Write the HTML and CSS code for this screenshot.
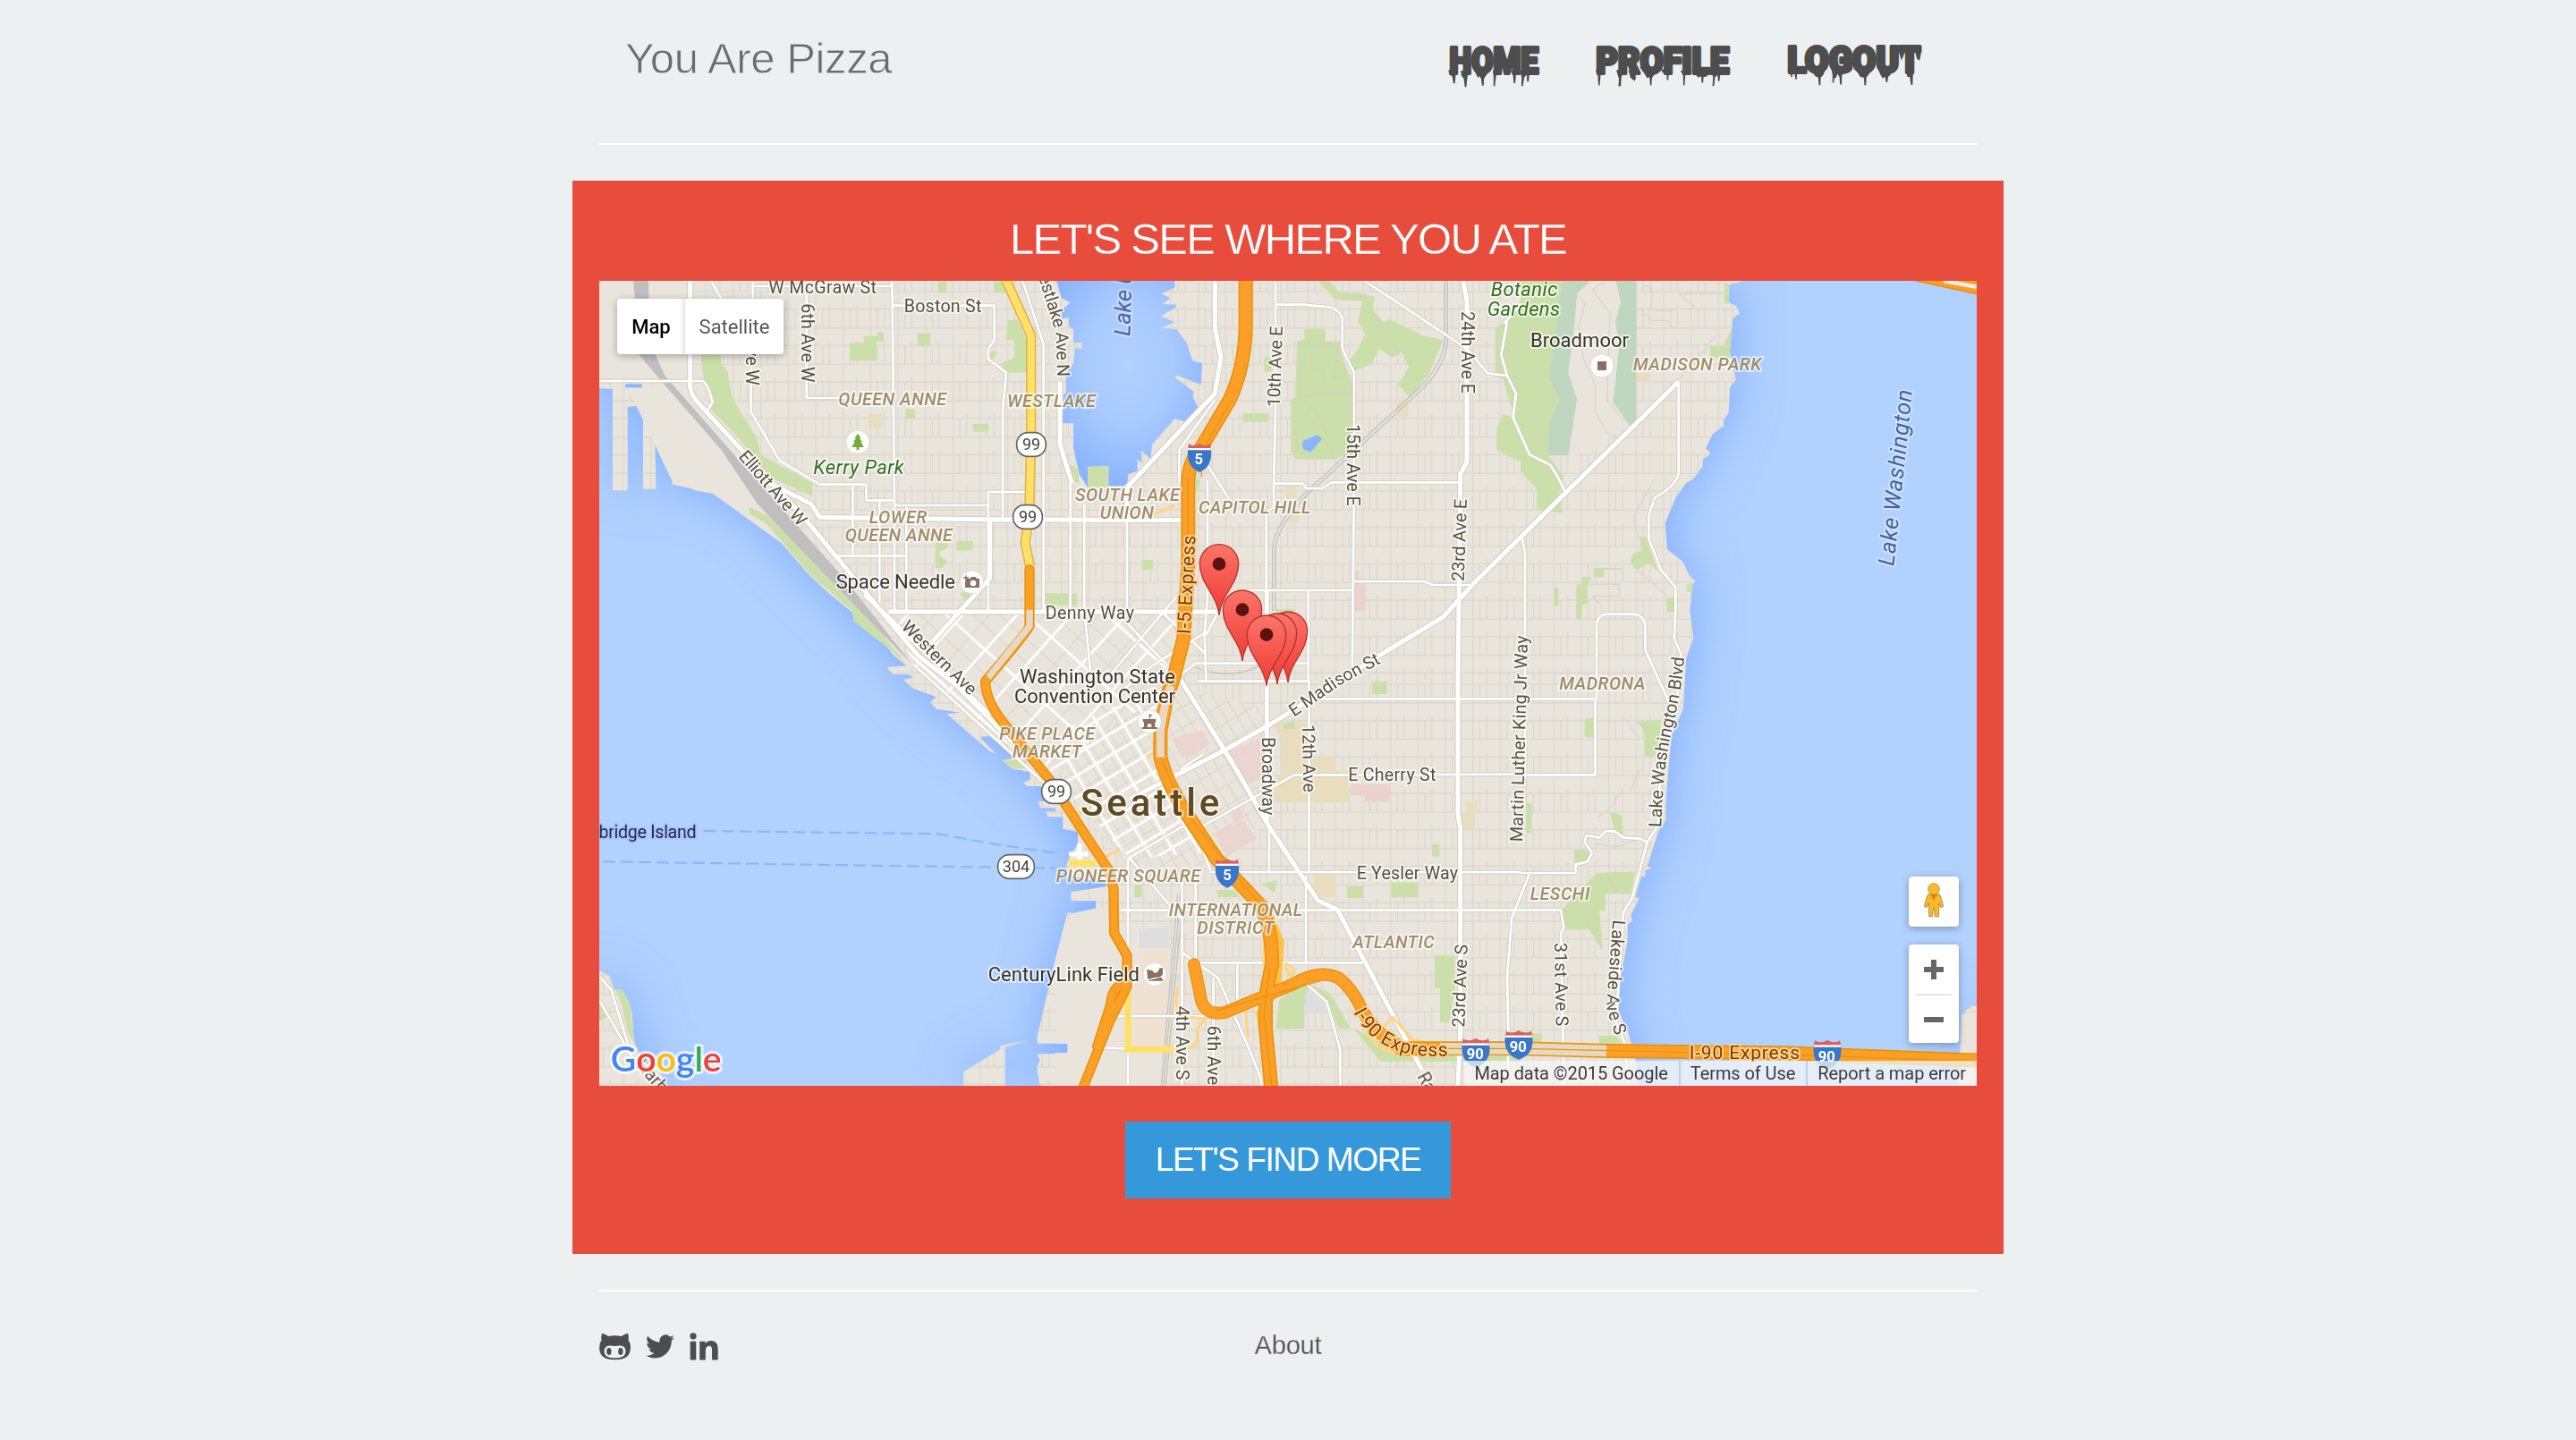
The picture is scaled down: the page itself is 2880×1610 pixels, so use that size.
FILE: index.html
```html
<!DOCTYPE html>
<html lang="en">
<head>
<meta charset="utf-8">
<title>You Are Pizza</title>
<link rel="stylesheet" href="styles.css">
</head>
<body>
<div class="container">
  <header class="header">
    <h1 class="brand">You Are Pizza</h1>
    <nav class="nav">
      <a class="nav-link" aria-label="Home"><svg width="104" height="50" viewBox="54 56 291 140">
        <text x="61" y="147" textLength="278" lengthAdjust="spacingAndGlyphs">HOME</text>
        <path d="M58 138H82L80 160 78 180H73L70 158 60 152ZM97 140H121L116 168 114 191H109L106 165 98 155ZM132 128H186L178 152 169 165 168 187H163L160 165 154 157 150 163 145 152ZM197 140H220L207 156 203 189H199L199 158ZM252 140H275L269 155 267 179H262L260 155ZM280 140H325L311 150 309 174H304L303 152 295 162 291 188H286L287 160Z"/>
      </svg></a>
      <a class="nav-link" aria-label="Profile"><svg width="154" height="50" viewBox="510 56 431 140">
        <text x="517" y="147" textLength="416" lengthAdjust="spacingAndGlyphs">PROFILE</text>
        <path d="M515 138H541L540 152 531 153 528 186H524L522 155ZM580 138H605L596 160 594 189H587L588 165ZM618 138H640L641 165 637 172 624 162ZM653 128H710L702 150 692 162 690 186H686L684 160 676 163 670 152ZM719 136H748L744 150 743 170H739L737 148 725 146ZM781 140H805L796 155 794 186H790L789 155ZM815 140H868L864 158 853 160 852 178H847L846 158 835 161 828 151ZM878 140H915L906 150 903 173H899L897 154 889 160 886 188H881L883 162Z"/>
      </svg></a>
      <a class="nav-link" aria-label="Logout"><svg width="154" height="50" viewBox="1105 56 435 140">
        <text x="1112" y="147" textLength="420" lengthAdjust="spacingAndGlyphs">LOGOUT</text>
        <path d="M1112 136H1155L1142 150 1141 168H1137L1134 148 1128 150 1127 160H1123L1121 148ZM1178 128H1233L1226 152 1217 162 1216 186H1211L1209 162 1200 158ZM1250 134H1295L1284 155 1283 184H1278L1276 160 1269 150 1266 162 1260 164 1258 178H1254L1254 152ZM1322 128H1378L1370 150 1361 162 1360 186H1355L1353 162 1342 160ZM1395 128H1445L1438 152 1430 160 1427 177H1423L1420 160 1412 164 1405 152ZM1487 130H1512L1508 158 1507 185H1502L1498 160 1490 160ZM1462 76H1485L1472 108ZM1515 76H1535L1531 100 1528 108 1520 102Z"/>
      </svg></a>
    </nav>
  </header>

  <main class="panel">
    <h2 class="panel-title">LET'S SEE WHERE YOU ATE</h2>
    <div class="map">
      <svg class="map-canvas" width="1540" height="900" viewBox="30 42 4620 2700">
        <defs>
          <filter id="shoreBlur" x="-10%" y="-10%" width="120%" height="120%"><feGaussianBlur stdDeviation="80"/></filter>
          <radialGradient id="lake" cx=".5" cy=".4" r=".6"><stop offset="0" stop-color="#b1d1ff"/><stop offset=".5" stop-color="#a8caff"/><stop offset="1" stop-color="#8ab4ff"/></radialGradient>
          <linearGradient id="pin" x1="0" y1="0" x2="0" y2="1"><stop offset="0" stop-color="#fc7569"/><stop offset="1" stop-color="#ee3a34"/></linearGradient>
          <pattern id="blocks" width="92" height="122" patternUnits="userSpaceOnUse"><path d="M20 0V122M66 0V78M0 15H92M0 78H92M43 15V78" class="lane"/></pattern>
          <pattern id="blocksNorth" width="68" height="60" patternUnits="userSpaceOnUse" patternTransform="rotate(42)"><path d="M0 5H68M5 0V60" class="lane"/></pattern>
          <pattern id="streetsNorth" width="136" height="180" patternUnits="userSpaceOnUse" patternTransform="rotate(42)"><path d="M0 65H136M73 0V180" class="white-street"/></pattern>
          <pattern id="blocksSouth" width="36" height="60" patternUnits="userSpaceOnUse" patternTransform="rotate(-31)"><path d="M0 5H36M5 0V60" class="lane"/></pattern>
          <pattern id="streetsSouth" width="74" height="62" patternUnits="userSpaceOnUse" patternTransform="rotate(-31)"><path d="M0 5H74M5 0V62" class="white-street"/></pattern>
          <g id="land">
            <path d="M30 42H1560V1380H1050L1085 1372 1065 1362H1015L995 1338 1060 1333 1020 1300 965 1235 885 1185 880 1155 800 1090 735 1030 640 920 585 855 530 828 410 755 350 745 320 728 275 725 270 480 255 430 235 400 213 403 220 740H177V475H185V460L125 465V745H75V405L30 402Z"/>
            <path transform="translate(1560)" d="M0 42H1560V1380H0Z"/>
            <path transform="translate(3120)" d="M0 42H745L700 55 698 115 722 125 735 150 712 168 702 280 722 375 702 400 698 485 680 510 682 528 645 555 620 605 635 615 632 628 612 638 610 665 578 708 555 720 520 770 485 855 492 942 545 985 565 1028 587 1050 577 1060 568 1150 580 1240 555 1310 552 1380H0Z"/>
            <path transform="translate(0 1380)" d="M1050 0H1560V460H1535L1528 442H1560V430H1508L1503 408H1535L1510 357H1465L1452 345 1475 335V310L1415 298 1380 270 1420 265 1400 240 1350 190H1315L1310 198 1362 250 1340 240 1196 115 1240 110 1160 98 1140 75 1160 58 1080 28ZM1560 935L1498 1200 1500 1220H1560V1255H1498L1508 1275 1498 1300 1508 1362H1560ZM1375 1228L1470 1210 1391 1232V1362H1252V1315L1375 1240ZM30 975L65 995 80 1040 105 1040 130 1080 140 1120 145 1190 150 1225 180 1280 230 1310 260 1362H30Z"/>
            <path transform="translate(1560 1380)" d="M0 0H1560V1362H0V1252H90V1220H0V935L40 782H135V742H52V712L172 693 168 680 60 660 35 630 45 600 75 550V510L25 500V460H0Z"/>
            <path transform="translate(3120 1380)" d="M0 0H552L545 100 505 190 488 400 487 470 462 510 425 625 440 632 418 640V660H405L385 730 398 733 370 790 375 810 360 820 358 880 335 1000 325 1105 360 1180 390 1290 395 1362H0ZM1490 1110L1515 1095H1530V1362H1470L1480 1250Z"/>
          </g>
          <g id="arterials">
            <path d="M335 42V400Q340 430 370 460L720 840 1100 1300 1230 1400 1560 1735M920 1095L1220 1380 1340 1500M600 720L740 790 770 835 1340 842 2000 845M1340 842V1040L1140 1260M1000 1152H2110"/>
            <path transform="translate(1560)" d="M535 42V200L555 300 535 420 240 735V840M1368 42L1380 110V650L1358 690 1350 1380V1830L1358 1880V2560L1350 2742M2090 380L1400 1060 1300 1170 1100 1290 720 1530 560 1620 250 1780M709 1080V1860M15 380V590L55 720M420 1380L600 1670 715 1870 840 2060 880 2120 945 2150 1040 2330 1230 2690"/>
          </g>
          <g id="streets">
            <path d="M30 378H375Q395 385 410 450L390 480M545 42V60H1010V42M545 60L538 480 635 645 770 725H925V778H1020M1012 42L1020 780V1150M725 60V435H1015M1020 795H1335M1465 750H1335V1150M1012 125H1355V240L1335 270V305L1395 350 1383 470V840M880 730V965M815 965H1060V800M970 780V1120M1060 965V1150M405 42L450 120M1450 42L1520 255V1150M1085 1330L1560 1760"/>
            <path transform="translate(1560)" d="M738 42V480L732 720V800L707 820V1080M738 122H830L920 130Q950 140 962 165V270L1002 350V720L995 1380M732 722H830L840 738H895L925 718H1350M640 1080H995M998 1050H1235L1265 1062H1400M848 1080V1380M1035 42L1140 110 1380 270 1450 352 1515 360M1515 180L1495 290 1515 360 1545 420 1535 500 1590 625 1660 660 1685 700 1710 750M510 660L580 770M535 440L415 610V720M510 710V1100L500 1230 505 1380M505 1230L545 1155M50 720V1150M97 790V1150M240 840V1150M415 1090L170 1380M360 1155L500 1290M240 1190L420 1380M97 1150L120 1380M505 1220L330 1330 220 1420M320 1440L470 1325H848M1560 120L1505 185"/>
            <path transform="translate(3120)" d="M530 380V690Q520 730 450 770L430 830V905L470 1010 520 1070V1150L515 1240 540 1300 520 1500M5 905L15 950V1700M255 1445V1190Q265 1160 290 1160H380Q415 1165 418 1200V1280L500 1460"/>
            <path transform="translate(0 1380)" d="M30 995L70 1040 130 1235M30 1075L160 1300"/>
            <path transform="translate(1560 1380)" d="M495 490L800 320 1560 317M495 250L420 300M850 0V650M840 660V950M480 5H848M880 65H1810M717 480V645H1560M215 773H1560M475 950H1030M243 600V1362M150 1235L390 1240M205 1128H520M425 640V1362M470 640V940M425 915L545 1000 650 1240 690 1340V1362M530 1000V1362M610 950V1100M830 1010L910 1080 955 1240V1362M1590 650L1530 800 1515 1000 1520 1220 1515 1362M520 645H717M243 600L430 490M250 600L420 800M100 1362L170 1200 190 1130M340 170L520 640"/>
            <path transform="translate(3120 1380)" d="M250 65V320H0M0 648H185V620L225 610 240 580 215 545 220 522 265 530 285 508H315L345 530 400 533 425 545M530 60L470 300 460 490 425 545 375 730 345 780 330 1000 320 1150 350 1220 360 1362M0 772H135L145 830 135 850 145 1362"/>
          </g>
          <g id="interstate"><path d="M-39 -28L-36 -48Q-20 -36 0 -49Q20 -36 36 -48L39 -28Z" fill="#d9635c"/><path d="M-38 -33H38V-24H-38Z" fill="#fff"/><path d="M-39 -26H39Q44 30 0 48Q-44 30 -39 -26Z" fill="#3a77c8"/></g>
          <g id="marker"><path d="M0 0C-7 -70 -65 -104 -65 -172A65 65 0 0 1 65 -172C65 -104 7 -70 0 0Z" fill="url(#pin)" stroke="#b4332b" stroke-width="4"/></g>
          <path id="elliottLine" d="M495 632L710 880"/>
          <path id="westernLine" d="M1040 1205L1180 1345 1290 1450"/>
          <path id="westlakeLine" d="M1488 -20L1525 100 1562 220 1570 460"/>
          <path id="madisonLine" d="M2360 1505L2520 1395 2700 1298"/>
          <path id="blvdLine" d="M3592 1875Q3598 1640 3640 1500Q3665 1380 3675 1240"/>
          <path id="expressLine" d="M2560 2495Q2650 2670 2910 2638"/>
          <path id="lakesideLine" d="M3430 2185L3408 2480 3460 2640"/>
        </defs>

        <rect x="30" y="42" width="4620" height="2700" fill="#b1d1ff"/>
        <use href="#land" fill="#7fabff" filter="url(#shoreBlur)"/>
        <use href="#land" fill="#e9e5dc"/>
        <use href="#land" fill="url(#blocks)"/>
        <path d="M30 42H335V370H30ZM125 400L335 378 490 580 860 1080 410 755 280 725ZM4600 2500H4650V2742H4590Z" fill="#e9e5dc"/>
        <path d="M1560 2320L1610 2165 1770 2130V2742H1560V2632H1650V2600H1560ZM1600 2230H1940V2742H1600Z" fill="#e9e5dc"/>
        <path d="M118 388H173V400H118Z" fill="#8ab4ff"/>

        <g class="park">
          <path d="M370 290H435L440 320 460 345 475 430 520 510 560 570 570 625 745 720V765L600 700 490 560 400 470Q415 420 380 370ZM530 800L595 830 820 1050 870 1090 1065 1335 1020 1290 885 1185 880 1150 740 1030 590 855 535 825ZM870 250H918V228H962V215H984V246H960V310H870ZM1098 218H1140V262H1098ZM1057 472H1089V504H1057ZM1283 522H1336V548H1283ZM1228 915H1283V946H1228ZM1400 175L1430 170 1462 235V350H1395L1375 320 1422 300V240H1395ZM1165 42H1195V82H1165ZM1353 42H1390L1395 82H1353ZM1157 920H1200V935L1170 950 1185 1005H1157ZM1165 985L1180 970 1197 985 1180 1002ZM1340 280H1370L1350 305H1340ZM1240 1090L1290 1075 1260 1120ZM1527 1090H1632V1130H1527Z"/>
          <path transform="translate(1560)" d="M108 665H176V735H108ZM790 437H805L810 245 835 240V203H905V245H955L960 290 1000 400V630H960L940 640H810L790 620ZM880 42H920L950 80 1030 85 1070 95 1065 140 1100 180 1120 170 1230 225 1300 240 1255 350 1190 435 1150 390 1185 330 1160 280 1130 300 1085 270 1060 320 1000 345 985 310 1015 270 1040 220 1015 180 1030 110 940 105ZM628 487H715V515H628ZM290 978H327V1011H290ZM740 1143H800V1165H740ZM700 298H725V346H700ZM470 700L487 715 470 755ZM1475 200L1510 180 1560 120V650L1480 610V540L1500 490 1540 500 1500 370 1475 350ZM45 655L75 675 80 720 55 715Z"/>
          <path transform="translate(3120)" d="M0 42H140L120 240 95 370 130 440 95 530V630L145 700 130 750 140 820 55 810V740L0 680ZM683 52H698V118H683ZM708 200L702 300H635V260H680ZM400 900H420L460 1015 430 990 390 1010 370 990 375 960 405 945ZM245 1005H338V1010H280V1035H240L225 1060V1120L207 1130V1175H187V1060H207V1035H245ZM112 1070H127V1133H112ZM490 1105H518V1151H490ZM558 1060H577V1085H558Z"/>
          <path transform="translate(0 1380)" d="M85 1040H105L130 1080 150 1225 125 1180 110 1100ZM30 1090L55 1130 30 1145ZM1380 270H1460L1470 297H1420Z"/>
          <path transform="translate(1560 1380)" d="M765 145L800 138 807 165H765ZM1062 5H1112V48H1062ZM1263 552H1288V593H1263ZM978 692H1034V732H978ZM1127 680H1215V730H1127ZM265 690H290V730H265ZM692 685L745 673 735 713ZM540 705H600L620 730H545ZM1272 925H1340V1035L1320 1150H1290V1035H1272ZM750 1075L850 1010V1080L835 1090V1170H740ZM850 1020L920 1050 990 1170H950L910 1080ZM1000 1170L1090 1280H1560V1262H1180ZM283 1155L315 1148 335 1165V1195L285 1200ZM370 150L395 140 415 190 375 230ZM365 620L395 612 385 635Z"/>
          <path transform="translate(3120 1380)" d="M215 130H245V192H215ZM390 140L470 135V190L450 257H415V170ZM298 440L340 455 343 518 315 505ZM180 570H240V600L180 615ZM255 648L385 643 370 718H285V775H265L275 905 230 838H150L140 770ZM20 415H38V513H20ZM262 1193H320L345 1225H265ZM0 1185H72V1215H0Z"/>
        </g>
        <path transform="translate(1560)" d="M828 580L880 558 894 572 855 617 830 605Z" fill="#8ab4ff"/>
        <path transform="translate(3120)" class="golf" d="M140 42H235L190 85 180 200 160 350 190 440 160 628H93V530L130 440 95 370 120 200ZM320 42H388V528H365L310 450 330 260 318 180 335 115Z"/>
        <path transform="translate(3120)" fill="#e9e5dc" d="M190 90L235 42H320L335 115 318 180 330 260 310 450 365 528 160 640 190 440 160 350 180 200Z"/>
        <g class="hospital">
          <path transform="translate(1560)" d="M1002 1060H1040V1150H1002ZM1002 1013H1018V1060H1002Z"/>
          <path transform="translate(1560 1380)" d="M990 350H1125V410H1038V388H990Z"/>
        </g>
        <g class="school">
          <path d="M932 490H976V534H932ZM3510 350H3556V382H3510ZM2703 440H2743V497H2703ZM2332 730H2368V770H2332ZM2343 810H2377V853H2343Z"/>
          <path transform="translate(1560 1380)" d="M865 655H940V730H865ZM1360 448H1388V500H1360ZM1375 410L1415 405 1405 500H1390Z"/>
        </g>
        <path transform="translate(1560 1380)" d="M282 905H388V1235H258V1050L282 1000Z" fill="#efe2d2"/>
        <path transform="translate(1560 1380)" d="M280 840L380 825V900H280ZM840 1040L905 1085V1120H835Z" fill="#dedede"/>
        <path d="M145 42H195L200 250 250 360 460 600 860 1050 1080 1330 780 1020 560 790 440 610 240 380 160 285Z" fill="#bfbfbf"/>
        <g class="rail"><path d="M2865 42V240Q2860 330 2760 420L2390 760Q2290 870 2288 940V1150M2875 42V245Q2870 335 2770 425L2400 765Q2300 875 2298 940V1150M2020 1335Q2150 1390 2260 1325M1990 2080L1930 2742M1970 2100L1915 2742M1980 2090L1922 2742"/></g>
        <g class="trail">
          <path transform="translate(1560)" d="M820 255H950L930 370 990 360V415H900L820 430ZM860 270V340H900V390M810 620L805 540 860 460H990M930 610L900 530 870 470M1030 100L1100 200 1160 300"/>
          <path transform="translate(3120)" d="M190 90L215 120 195 200 210 300 250 390V480L290 550 340 580M290 42L240 70 300 150 290 440 350 520M410 60H440V130Q450 150 512 140M410 150L440 175H490L510 200M585 130L530 85H680M450 705L380 830Q380 900 430 960M380 1000L490 1100M230 1060H330V1100H240L280 1140M660 220L535 370"/>
          <path transform="translate(3120 1380)" d="M290 655L310 700 350 720M205 765L240 850 275 905M350 130L400 200M400 300L370 370M260 460L300 430 340 370M250 550L320 560 400 533"/>
        </g>

        <path d="M1000 1155H2000L1960 1290 1900 1500 1700 1620 1560 1730 1090 1335Z" fill="#e9e5dc"/>
        <path d="M1000 1155H2000L1960 1290 1900 1500 1700 1620 1560 1730 1090 1335Z" fill="url(#blocksNorth)"/>
        <path d="M1000 1155H2000L1960 1290 1900 1500 1700 1620 1560 1730 1090 1335Z" fill="url(#streetsNorth)"/>
        <path d="M1950 1400L2270 1480V1860L2050 2020H1810L1570 1700 1700 1560 1900 1450Z" fill="#e9e5dc"/>
        <path d="M1950 1400L2270 1480V1700L2260 1860 2050 2020H1810L1570 1700 1700 1560 1900 1450Z" fill="url(#blocksSouth)"/>
        <path d="M1900 1400L1910 1660 2060 1960 1810 1980 1540 1690 1600 1540Z" fill="url(#streetsSouth)"/>
        <path class="school" transform="translate(1560 1380)" d="M725 145H765V165H807V142H848V260H940V305H985V410H725V350L760 310V200Z"/>
        <path class="hospital" transform="translate(1560 1380)" d="M390 195L490 170 520 215 455 260 420 255ZM580 240L700 190V330L640 350ZM530 515L630 470 675 530 575 595ZM585 440L620 430 632 460 600 478Z" opacity=".85"/>

        <path transform="translate(1560)" fill="url(#lake)" d="M-5 42L5 45 20 100 50 115 20 140V170L45 165V195L60 205V250H88V268H65L60 320 35 350V420H28L22 520H60V600L80 690 108 735V665L178 663V730H240L245 690 275 680V640L290 655 288 610 318 640 325 590 400 505 440 515 480 470 460 430 465 415 400 365 410 360 488 390 492 318 460 310 440 250 410 210V205L355 200 400 180 355 160 405 130V122L358 120 385 100 355 85 400 65V42Z"/>

        <g class="casing casing-thin"><use href="#streets"/></g>
        <g class="casing casing-wide"><use href="#arterials"/></g>
        <g class="road road-thin"><use href="#streets"/></g>
        <g class="road road-wide"><use href="#arterials"/></g>
        <path class="road road-wide" d="M1605 1965H1670M1640 1930V1990"/>

        <g class="ferry"><path d="M380 1887L1165 1897 1365 1933 1560 1961M42 1990L1560 2012"/></g>

        <g class="ramp"><path transform="translate(1560 1380)" d="M710 800L755 920 735 1050 680 1130 720 1300M700 850V950L720 1100 690 1200M770 950L800 970 790 1000 770 960M410 1030L405 1090 425 1130 480 1135H510M500 1140L475 1170V1220L440 1240H400M640 1110L645 1200M1040 1180Q1080 1260 1220 1260M1130 1130L1090 1180M1130 1130L1200 1210 1300 1225M305 260L340 235M80 450L120 430M165 595L215 570M495 495L530 580"/><path d="M1880 830L1960 795M1990 1250L2020 1240"/></g>
        <g class="hwy-yellow-edge"><path d="M1390 30L1478 225V560L1472 840 1458 920 1475 1000"/></g>
        <g class="hwy-yellow"><path d="M1390 30L1478 225V560L1472 840 1458 920 1475 1000"/></g>
        <path d="M1803 2430V2620H1955M1605 1995H1695" class="local-yellow"/>
        <path d="M2265 2150L2310 2260 2300 2400 2250 2500 2290 2742" fill="none" stroke="#ffc145" stroke-width="34"/>
        <g class="hwy-edge">
          <path d="M1473 1010V1200Q1470 1215 1325 1385 Q1325 1450 1390 1530L1540 1715 1660 1900 1740 2020 1755 2080 1757 2230 1800 2305V2410L1740 2530 1655 2742M1790 2400Q1750 2410 1745 2470L1700 2610" stroke-width="34"/>
          <path d="M2198 30V200Q2195 330 2145 440L2050 600Q2005 650 2005 720V1000L1990 1240 1955 1380 1935 1430 1912 1550V1640Q1930 1710 1980 1800L2100 1980 2250 2140Q2285 2210 2287 2330L2265 2440V2550L2285 2760" stroke-width="48"/>
          <path d="M2025 2335L2050 2460Q2070 2510 2130 2495L2360 2400Q2440 2350 2510 2380Q2560 2420 2590 2490Q2640 2580 2730 2615" stroke-width="42"/>
          <path d="M2720 2617H3120L3420 2625 4000 2632 4660 2657M4450 20L4660 66" stroke-width="48"/>
        </g>
        <g class="hwy">
          <path d="M1473 1010V1200Q1470 1215 1325 1385 Q1325 1450 1390 1530L1540 1715 1660 1900 1740 2020 1755 2080 1757 2230 1800 2305V2410L1740 2530 1655 2742M1790 2400Q1750 2410 1745 2470L1700 2610" stroke-width="24"/>
          <path d="M2198 30V200Q2195 330 2145 440L2050 600Q2005 650 2005 720V1000L1990 1240 1955 1380 1935 1430 1912 1550V1640Q1930 1710 1980 1800L2100 1980 2250 2140Q2285 2210 2287 2330L2265 2440V2550L2285 2760" stroke-width="38"/>
          <path d="M2025 2335L2050 2460Q2070 2510 2130 2495L2360 2400Q2440 2350 2510 2380Q2560 2420 2590 2490Q2640 2580 2730 2615" stroke-width="34"/>
          <path d="M2720 2617H3120L3420 2625 4000 2632 4660 2657M4450 20L4660 66" stroke-width="38"/>
        </g>
        <g class="tunnel"><path d="M1473 1145V1200L1335 1372" stroke-width="22"/><path d="M1948 1400L1932 1440 1912 1550V1640" stroke-width="26"/><path d="M2850 2617H3120L3408 2625" stroke-width="38"/></g>
        <g class="hwy-line"><path d="M2005 700V1000L1990 1240M2145 450L2060 600M2050 640V700M2720 2617H3120L4000 2637 4660 2660M2100 2490L2360 2415 2450 2390M2010 1840L2250 2140M2278 2350L2260 2500 2285 2742M1912 1640L1970 1770"/></g>
        <path d="M4540 42L4650 62" stroke="#f0eee6" stroke-width="14"/>

        <g class="label">
          <text x="598" y="84" textLength="362">W McGraw St</text>
          <text x="1052" y="148" textLength="260">Boston St</text>
          <text transform="translate(709 118) rotate(90)" textLength="264">6th Ave W</text>
          <text transform="translate(522 230) rotate(90)" textLength="162">Ave W</text>
          <text><textPath href="#elliottLine" textLength="312">Elliott Ave W</textPath></text>
          <text><textPath href="#westernLine">Western Ave</textPath></text>
          <text><textPath href="#westlakeLine" textLength="395">Westlake Ave N</textPath></text>
          <text transform="translate(2312 466) rotate(-88)" textLength="272">10th Ave E</text>
          <text transform="translate(2538 522) rotate(90)" textLength="275">15th Ave E</text>
          <text transform="translate(2923 144) rotate(90)" textLength="276">24th Ave E</text>
          <text transform="translate(2930 1050) rotate(-88)" textLength="276">23rd Ave E</text>
          <text x="1526" y="1176" textLength="298">Denny Way</text>
          <text><textPath href="#madisonLine">E Madison St</textPath></text>
          <text transform="translate(2252 1572) rotate(90)" textLength="262">Broadway</text>
          <text transform="translate(2388 1530) rotate(89)" textLength="228">12th Ave</text>
          <text x="2542" y="1718" textLength="294">E Cherry St</text>
          <text x="2570" y="2048" textLength="340">E Yesler Way</text>
          <text transform="translate(3126 1924) rotate(-88.5)" textLength="692">Martin Luther King Jr Way</text>
          <text><textPath href="#blvdLine" textLength="576">Lake Washington Blvd</textPath></text>
          <text transform="translate(2932 2546) rotate(-88)" textLength="278">23rd Ave S</text>
          <text transform="translate(3234 2262) rotate(89)" textLength="280">31st Ave S</text>
          <text><textPath href="#lakesideLine">Lakeside Ave S</textPath></text>
          <text transform="translate(1964 2474) rotate(90)" textLength="248">4th Ave S</text>
          <text transform="translate(2070 2540) rotate(90)" textLength="250">6th Ave S</text>
          <text transform="translate(2772 2710) rotate(62)">Rainier Ave S</text>
          <text transform="translate(150 2675) rotate(48)">Harbor Ave</text>
        </g>
        <g class="label place">
          <text x="824" y="1073" textLength="400">Space Needle</text>
          <text x="1440" y="1391" textLength="522">Washington State</text>
          <text x="1422" y="1457" textLength="540">Convention Center</text>
          <text x="3153" y="265" textLength="330">Broadmoor</text>
          <text x="1334" y="2390" textLength="508">CenturyLink Field</text>
        </g>
        <text class="label ferry-label" x="-84" y="1910" textLength="440">Bainbridge Island</text>
        <g class="label area">
          <text x="832" y="460" textLength="362">QUEEN ANNE</text>
          <text x="1398" y="465" textLength="296">WESTLAKE</text>
          <text x="935" y="854" textLength="194">LOWER</text>
          <text x="854" y="914" textLength="360">QUEEN ANNE</text>
          <text x="1626" y="780" textLength="350">SOUTH LAKE</text>
          <text x="1709" y="840" textLength="180">UNION</text>
          <text x="2040" y="822" textLength="376">CAPITOL HILL</text>
          <text x="3498" y="342" textLength="430">MADISON PARK</text>
          <text x="3250" y="1413" textLength="288">MADRONA</text>
          <text x="1372" y="1582" textLength="320">PIKE PLACE</text>
          <text x="1416" y="1641" textLength="232">MARKET</text>
          <text x="1562" y="2058" textLength="484">PIONEER SQUARE</text>
          <text x="1940" y="2172" textLength="448">INTERNATIONAL</text>
          <text x="2035" y="2232" textLength="258">DISTRICT</text>
          <text x="2557" y="2280" textLength="274">ATLANTIC</text>
          <text x="3152" y="2117" textLength="200">LESCHI</text>
        </g>
        <g class="label garden">
          <text x="748" y="689" textLength="304">Kerry Park</text>
          <text x="3020" y="94" textLength="224">Botanic</text>
          <text x="3008" y="158" textLength="244">Gardens</text>
        </g>
        <g class="label water-label">
          <text transform="translate(1810 228) rotate(-88)">Lake Union</text>
          <text transform="translate(4372 1000) rotate(-84)" textLength="594">Lake Washington</text>
        </g>
        <g class="label hwy-label">
          <text transform="translate(2012 1228) rotate(-87)" textLength="332">I-5 Express</text>
          <text><textPath href="#expressLine" textLength="372">I-90 Express</textPath></text>
          <text x="3686" y="2652" textLength="370">I-90 Express</text>
        </g>
        <text class="label city" x="1644" y="1835" textLength="474">Seattle</text>

        <g class="state-shield">
          <rect x="1430" y="551" width="98" height="80" rx="38"/><text x="1479" y="610">99</text>
          <rect x="1418" y="794" width="98" height="80" rx="38"/><text x="1467" y="853">99</text>
          <rect x="1514" y="1715" width="98" height="80" rx="38"/><text x="1563" y="1774">99</text>
          <rect x="1367" y="1967" width="122" height="80" rx="38"/><text x="1428" y="2026">304</text>
        </g>
        <g class="interstate">
          <use href="#interstate" x="2043" y="636"/><text x="2041" y="658">5</text>
          <use href="#interstate" x="2136" y="2030"/><text x="2136" y="2052">5</text>
          <use href="#interstate" transform="translate(2970 2632) scale(1.18 1)"/><text x="2968" y="2652">90</text>
          <use href="#interstate" transform="translate(3114 2606) scale(1.18 1)"/><text x="3112" y="2629">90</text>
          <use href="#interstate" transform="translate(4149 2638) scale(1.18 1)"/><text x="4147" y="2660">90</text>
        </g>
        <g class="poi">
          <circle cx="897" cy="583" r="39"/><path d="M897 554L908 570H903L912 583H907L918 600H901V609H893V600H876L887 583H882L891 570H886Z" fill="#74ad3d"/>
          <circle cx="1279" cy="1052" r="39"/><path d="M1258 1041H1273L1278 1035H1292L1297 1041H1305V1071H1257V1050H1258ZM1251 1036H1258V1030H1262V1036H1269V1040H1262V1047H1258V1040H1251Z" fill="#8d6e63"/><circle class="hole" cx="1284" cy="1056" r="10"/>
          <circle cx="3393" cy="327" r="39"/><path d="M3378 312H3408V342H3378Z" fill="#8d6e63"/>
          <circle cx="1876" cy="1520" r="39"/><path d="M1874 1494L1886 1500 1877 1504V1512H1897V1522H1894V1539H1902V1545H1850V1539H1857V1522H1853V1512H1874Z" fill="#8d6e63"/><path d="M1869 1528H1882V1539H1869Z" fill="#fff"/>
          <circle cx="1893" cy="2368" r="39"/><path d="M1866 2352L1885 2355Q1890 2368 1903 2360L1910 2347H1920V2365Q1918 2380 1895 2378L1870 2385ZM1872 2388L1915 2378 1922 2390H1872Z" fill="#8d6e63"/>
        </g>
        <g class="pins">
          <use href="#marker" x="2109" y="1163"/><circle cx="2109" cy="992" r="22"/>
          <use href="#marker" x="2187" y="1317"/><circle cx="2187" cy="1145" r="22"/>
          <use href="#marker" x="2340" y="1389"/><use href="#marker" x="2304" y="1395"/>
          <use href="#marker" x="2268" y="1401"/><circle cx="2268" cy="1229" r="22"/>
        </g>
        <text class="google" x="68" y="2695" textLength="372" lengthAdjust="spacingAndGlyphs"><tspan fill="#4285f4">G</tspan><tspan fill="#ea4335">o</tspan><tspan fill="#fbbc05">o</tspan><tspan fill="#4285f4">g</tspan><tspan fill="#34a853">l</tspan><tspan fill="#ea4335">e</tspan></text>
      </svg>

      <div class="map-types">
        <button class="map-type active">Map</button>
        <button class="map-type">Satellite</button>
      </div>
      <div class="map-controls">
        <button class="pegman" aria-label="Street View"><svg width="24" height="40" viewBox="1350 678 72 120"><path d="M1374 718Q1386 724 1398 718Q1408 720 1410 730L1418 760 1410 764 1404 750 1402 794H1390L1387 765H1384L1382 794H1370L1369 750 1362 764 1354 760 1362 730Q1364 720 1374 718Z" fill="#fbb829" stroke="#8a6d2a" stroke-width="2"/><path d="M1374 719H1398L1386 740Z" fill="#e17f1c"/><circle cx="1386" cy="702" r="19" fill="#fbb829" stroke="#a77c2c" stroke-width="2"/></svg></button>
        <div class="zoom">
          <button class="zoom-button" aria-label="Zoom in"><svg width="22" height="22" viewBox="0 0 22 22"><path d="M8 0H14V8H22V14H14V22H8V14H0V8H8Z"/></svg></button>
          <button class="zoom-button" aria-label="Zoom out"><svg width="22" height="22" viewBox="0 0 22 22"><path d="M0 8H22V14H0Z"/></svg></button>
        </div>
      </div>
      <div class="attribution">
        <span class="credit">Map data ©2015 Google</span>
        <span class="credit">Terms of Use</span>
        <span class="credit">Report a map error</span>
      </div>
    </div>
    <button class="find-more">LET'S FIND MORE</button>
  </main>

  <footer class="footer">
    <div class="social">
      <a aria-label="GitHub"><svg width="35" height="31" viewBox="29.5 62 105 93"><path fill-rule="evenodd" d="M39 64Q50 66 60 74Q82 70 104 74Q114 66 125 64Q130 76 127 87Q136 98 134 117C132 145 110 153 82 153S32 145 30 117Q29 98 37 87Q34 76 39 64ZM82 107Q70 105 58 106Q46 110 46 124Q46 147 82 147T118 124Q118 110 106 106Q94 105 82 107Z"/><ellipse cx="62" cy="125" rx="8" ry="12"/><ellipse cx="101" cy="125" rx="8" ry="12"/></svg></a>
      <a aria-label="Twitter"><svg width="32" height="27" viewBox="0 2 24 20"><path d="M23.95 4.57a10 10 0 01-2.82.78 4.96 4.96 0 002.16-2.73c-.95.56-2 .96-3.13 1.19a4.92 4.92 0 00-8.38 4.48C7.69 8.1 4.07 6.13 1.64 3.16a4.82 4.82 0 00-.67 2.48c0 1.71.87 3.21 2.19 4.1a4.9 4.9 0 01-2.23-.62v.06a4.92 4.92 0 003.95 4.83 5 5 0 01-2.21.08 4.94 4.94 0 004.6 3.42A9.87 9.87 0 010 19.54a14 14 0 007.55 2.21c9.05 0 14-7.5 14-13.99l-.02-.63A9.94 9.94 0 0024 4.59z"/></svg></a>
      <a aria-label="LinkedIn"><svg width="32" height="31" viewBox="332 57 97 93"><circle cx="344" cy="68" r="11"/><path d="M334 86H354V149H334ZM366 86H385V94Q393 84 406 84Q428 85 428 111V149H408V115Q408 101 398 101Q386 102 386 116V149H366Z"/></svg></a>
    </div>
    <a class="about">About</a>
    <span></span>
  </footer>
</div>
</body>
</html>
```
FILE: styles.css
```css
* { box-sizing: border-box; }

body {
  margin: 0;
  background: #ecf0f1;
  color: #4d4d4d;
  font-family: "Liberation Sans", Arial, sans-serif;
}

button { border: 0; margin: 0; padding: 0; font-family: inherit; }

.container { width: 1600px; margin: 0 auto; }

/* Header */
.header {
  display: flex;
  justify-content: space-between;
  align-items: flex-start;
  height: 162px;
  margin: 0 30px 40px;
  padding: 37px 60px 0 29px;
  border-bottom: 2px solid #fff;
}
.brand {
  margin: 0;
  color: #6c6c6c;
  font-size: 49px;
  line-height: 56px;
  font-weight: 400;
  letter-spacing: -0.4px;
  -webkit-text-stroke: 0.8px #ecf0f1;
}
.nav { display: flex; gap: 60px; margin-top: 12px; }
.nav-link svg { display: block; fill: #4d4d4d; overflow: visible; }
.nav-link text {
  font: 900 114px Roboto, sans-serif;
  stroke: #4d4d4d;
  stroke-width: 11px;
  stroke-linejoin: round;
}

/* Panel */
.panel {
  display: flex;
  flex-direction: column;
  align-items: center;
  height: 1200px;
  padding: 37px 30px 0;
  background: #e84c3d;
}
.panel-title {
  margin: 0 0 19px;
  color: #fff;
  font-size: 49px;
  line-height: 56px;
  font-weight: 400;
  letter-spacing: -1.7px;
  -webkit-text-stroke: 0.3px #e84c3d;
}
.find-more {
  width: 364px;
  height: 86px;
  margin-top: 40px;
  background: #3498db;
  color: #fff;
  font-size: 37px;
  letter-spacing: -1.4px;
}

/* Map */
.map { position: relative; width: 1540px; height: 900px; overflow: hidden; }
.map-canvas { display: block; }
.lane { fill: none; stroke: #d9d4c9; stroke-width: 3; }
.white-street { fill: none; stroke: #fff; stroke-width: 8; }
.park { fill: #cadfaa; }
.golf { fill: #bfd7bf; }
.hospital { fill: #ebd2cf; }
.school { fill: #e8ddbd; }
.rail path { fill: none; stroke: #c3c3c3; stroke-width: 4; }
.trail path { fill: none; stroke: #d5d0c4; stroke-width: 3; }
.casing, .road { fill: none; stroke-linejoin: round; }
.casing { stroke: #d3cdc1; }
.road { stroke: #fff; }
.casing-thin { stroke-width: 13px; }
.casing-wide { stroke-width: 21px; }
.road-thin { stroke-width: 8px; }
.road-wide { stroke-width: 15px; }
.ferry path { fill: none; stroke: #8ab4ff; stroke-width: 6; stroke-dasharray: 42 18; }
.ramp path { fill: none; stroke: #ffd47e; stroke-width: 9; }
.hwy-yellow-edge path { fill: none; stroke: #e6b34d; stroke-width: 34; }
.hwy-yellow path { fill: none; stroke: #ffe168; stroke-width: 24; }
.local-yellow { fill: none; stroke: #ffe168; stroke-width: 22; }
.hwy-edge path { fill: none; stroke: #e8940f; stroke-linejoin: round; stroke-linecap: round; }
.hwy path { fill: none; stroke: #fb9f26; stroke-linejoin: round; stroke-linecap: round; }
.hwy-line path { fill: none; stroke: #e8940f; stroke-width: 4; }
.tunnel path { fill: none; stroke: #e6d8c3; }

.label {
  font-family: Roboto, sans-serif;
  font-size: 59px;
  fill: #57513f;
  stroke: rgba(255, 255, 255, 0.6);
  stroke-width: 12px;
  stroke-linejoin: round;
  paint-order: stroke;
}
.place { font-size: 66px; fill: #38332b; }
.area { font-size: 59px; font-style: italic; font-weight: 500; fill: #a08e68; }
.garden { font-size: 66px; font-style: italic; fill: #33701f; }
.water-label { font-size: 76px; font-style: italic; fill: #456293; stroke: rgba(255, 255, 255, 0.35); }
.ferry-label { fill: #22265c; stroke: #a9c6f2; }
.hwy-label { font-size: 63px; fill: #7a3f00; stroke: #ffce8a; }
.city { font-size: 126px; font-weight: 500; fill: #5e4b23; letter-spacing: 8px; }

.state-shield rect { fill: #fff; stroke: #666; stroke-width: 5; }
.state-shield text { font: 54px Roboto, sans-serif; fill: #444; text-anchor: middle; }
.interstate text { font: 700 50px Roboto, sans-serif; fill: #fff; text-anchor: middle; }
.poi circle { fill: #fff; stroke: #d5cfc3; stroke-width: 2; }
.poi .hole { stroke: none; }
.pins circle { fill: #5c1210; }
.google {
  font: 600 116px Lato, sans-serif;
  stroke: rgba(255, 255, 255, 0.7);
  stroke-width: 18px;
  stroke-linejoin: round;
  paint-order: stroke;
}

.map-types {
  position: absolute;
  top: 20px;
  left: 20px;
  display: flex;
  height: 62px;
  border-radius: 4px;
  background: #fff;
  box-shadow: 0 2px 8px rgba(0, 0, 0, 0.3);
}
.map-type {
  width: 110px;
  background: none;
  color: #565656;
  font: 400 22px Roboto, sans-serif;
}
.map-type.active {
  width: 76px;
  color: #000;
  font-weight: 500;
  box-shadow: inset -7px 0 6px -6px rgba(0, 0, 0, 0.18);
}
.map-controls {
  position: absolute;
  right: 20px;
  bottom: 48px;
  display: flex;
  flex-direction: column;
  gap: 20px;
}
.pegman, .zoom {
  width: 56px;
  border-radius: 4px;
  background: #fff;
  box-shadow: 0 2px 8px rgba(0, 0, 0, 0.3);
}
.pegman { display: flex; justify-content: center; height: 56px; padding-top: 6px; }
.zoom { height: 110px; padding: 0 8px; }
.zoom-button {
  display: flex;
  align-items: center;
  justify-content: center;
  width: 40px;
  height: 55px;
  background: none;
  fill: #666;
}
.zoom-button + .zoom-button { border-top: 2px solid #e6e6e6; }
.attribution {
  position: absolute;
  right: 0;
  bottom: 0;
  display: flex;
  gap: 2px;
  height: 28px;
  color: #3c3c3c;
  font: 400 20px/28px Roboto, sans-serif;
  letter-spacing: -0.07px;
  white-space: nowrap;
}
.credit { padding: 0 12px 0 11px; background: rgba(245, 245, 245, 0.75); }

/* Footer */
.footer {
  display: grid;
  grid-template-columns: 1fr auto 1fr;
  align-items: start;
  margin: 40px 30px 0;
  padding-top: 42px;
  border-top: 2px solid #fff;
}
.social { display: flex; align-items: center; gap: 17px; padding-top: 4px; }
.social svg { display: block; fill: #4d4d4d; }
.about {
  font-size: 29px;
  line-height: 36px;
  letter-spacing: -0.2px;
  -webkit-text-stroke: 0.3px #ecf0f1;
}
```
